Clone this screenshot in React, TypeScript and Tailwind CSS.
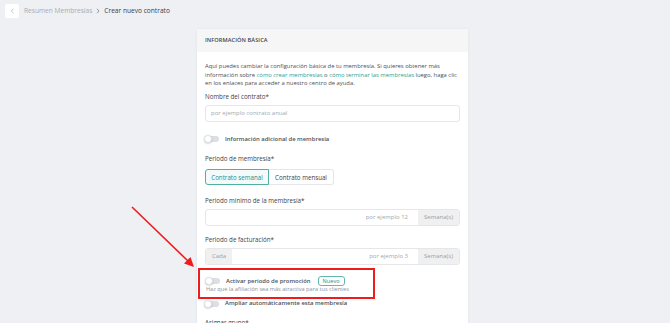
import React from 'react';

const font = { fontFamily: '"Open Sans", "Liberation Sans", sans-serif' };

// Small grey switch, always off in this screen
const Toggle = () => (
  <span className="relative inline-flex h-[6px] w-[14px] shrink-0 items-center rounded-full bg-[#dcdfe4]">
    <span className="absolute -left-[1px] h-[8px] w-[8px] rounded-full border border-[#e2e4e8] bg-white shadow-[0_0.5px_1.5px_rgba(0,0,0,0.25)]" />
  </span>
);

const Label = ({ children }: { children: React.ReactNode }) => (
  <div className="text-[6.2px] font-medium leading-[8px] text-[#3d424a]">{children}</div>
);

const Addon = ({ children }: { children: React.ReactNode }) => (
  <div className="flex items-center bg-[#f0f0f1] px-[6px] text-[6px] text-[#9a9ea5]">{children}</div>
);

export default function App() {
  return (
    <div className="relative h-[323px] w-[670px] overflow-hidden bg-[#eef0f4]" style={font}>
      {/* breadcrumb */}
      <div className="flex h-[29px] items-start pl-[5px] pt-[4px]">
        <button className="flex h-[14px] w-[14px] items-center justify-center rounded-[2px] bg-white text-[#b9bdc4]">
          <svg width="5" height="6" viewBox="0 0 5 6" fill="none">
            <path d="M3.5 0.8 L1.3 3 L3.5 5.2" stroke="currentColor" strokeWidth="0.9" />
          </svg>
        </button>
        <div className="ml-[5px] flex h-[14px] items-center text-[6.6px]">
          <span className="text-[#a7abb3]">Resumen Membresías</span>
          <svg className="mx-[4px] text-[#7d828a]" width="4" height="6" viewBox="0 0 4 6" fill="none">
            <path d="M1 0.8 L3 3 L1 5.2" stroke="currentColor" strokeWidth="0.8" />
          </svg>
          <span className="text-[#3b4048]">Crear nuevo contrato</span>
        </div>
      </div>

      {/* card */}
      <div className="ml-[197px] w-[271px] rounded-[2px] bg-white shadow-[0_0_3px_rgba(0,0,0,0.06)]">
        <div className="flex h-[23px] items-center rounded-t-[2px] bg-[#f6f6f7] px-[8px] text-[5.6px] font-semibold tracking-[0.1px] text-[#3d424a]">
          INFORMACIÓN BÁSICA
        </div>

        <div className="px-[8px] pt-[10px]">
          <p className="text-[5.85px] leading-[8.5px] text-[#4a4f57]">
            Aquí puedes cambiar la configuración básica de tu membresía. Si quieres obtener más información sobre{' '}
            <span className="text-[#2f9e8f]">cómo crear membresías</span> o{' '}
            <span className="text-[#2f9e8f]">cómo terminar las membresías</span> luego, haga clic en los enlaces para
            acceder a nuestro centro de ayuda.
          </p>

          <div className="mt-[5px]">
            <Label>Nombre del contrato*</Label>
            <div className="mt-[4px] flex h-[17px] items-center rounded-[3px] border border-[#e4e6ea] px-[5px] text-[6px] text-[#a4a8ae]">
              por ejemplo contrato anual
            </div>
          </div>

          <div className="mt-[13px] flex items-center gap-[6px]">
            <Toggle />
            <span className="text-[5.9px] font-semibold text-[#4a4f57]">Información adicional de membresía</span>
          </div>

          <div className="mt-[12px]">
            <Label>Periodo de membresía*</Label>
            <div className="mt-[6px] flex h-[16px] w-[129px] text-[6.2px]">
              <div className="flex w-[64px] items-center justify-center rounded-l-[3px] border border-[#4fb0a3] bg-[#f3faf9] text-[#2b8c80]">
                Contrato semanal
              </div>
              <div className="flex flex-1 items-center justify-center rounded-r-[3px] border border-l-0 border-[#e4e6ea] text-[#3d424a]">
                Contrato mensual
              </div>
            </div>
          </div>

          <div className="mt-[12px]">
            <Label>Periodo mínimo de la membresía*</Label>
            <div className="mt-[4px] flex h-[17px] overflow-hidden rounded-[3px] border border-[#e4e6ea]">
              <div className="flex flex-1 items-center justify-end pr-[10px] text-[6px] text-[#a4a8ae]">por ejemplo 12</div>
              <Addon>Semana(s)</Addon>
            </div>
          </div>

          <div className="mt-[10px]">
            <Label>Periodo de facturación*</Label>
            <div className="mt-[4px] flex h-[17px] overflow-hidden rounded-[3px] border border-[#e4e6ea]">
              <Addon>Cada</Addon>
              <div className="flex flex-1 items-center justify-end pr-[10px] text-[6px] text-[#a4a8ae]">por ejemplo 3</div>
              <Addon>Semana(s)</Addon>
            </div>
          </div>

          {/* highlighted promotion block */}
          <div className="-ml-[7px] mt-[3px] w-[177px] border-2 border-[#ee1c1c] pb-[4px] pl-[6px] pt-[6px]">
            <div className="flex items-center gap-[6px]">
              <Toggle />
              <span className="text-[5.9px] font-semibold text-[#4a4f57]">Activar periodo de promoción</span>
              <span className="ml-[1px] rounded-[3px] border border-[#5fb8ad] px-[4px] text-[5.6px] leading-[8px] text-[#2b8c80]">
                Nuevo
              </span>
            </div>
            <div className="text-[5.6px] leading-[7px] text-[#8c9199]">
              Haz que la afiliación sea más atractiva para tus clientes
            </div>
          </div>

          <div className="flex items-center gap-[6px]">
            <Toggle />
            <span className="text-[5.9px] font-semibold text-[#4a4f57]">Ampliar automáticamente esta membresía</span>
          </div>

          <div className="mt-[11px] pb-[20px]">
            <Label>Asignar grupo*</Label>
          </div>
        </div>
      </div>

      {/* red annotation arrow */}
      <svg className="pointer-events-none absolute left-0 top-0" width="670" height="323">
        <line x1="132" y1="207" x2="188" y2="261" stroke="#ee1c1c" strokeWidth="1.6" />
        <path d="M194 267 L184 263.5 L190.5 257 Z" fill="#ee1c1c" />
      </svg>
    </div>
  );
}
